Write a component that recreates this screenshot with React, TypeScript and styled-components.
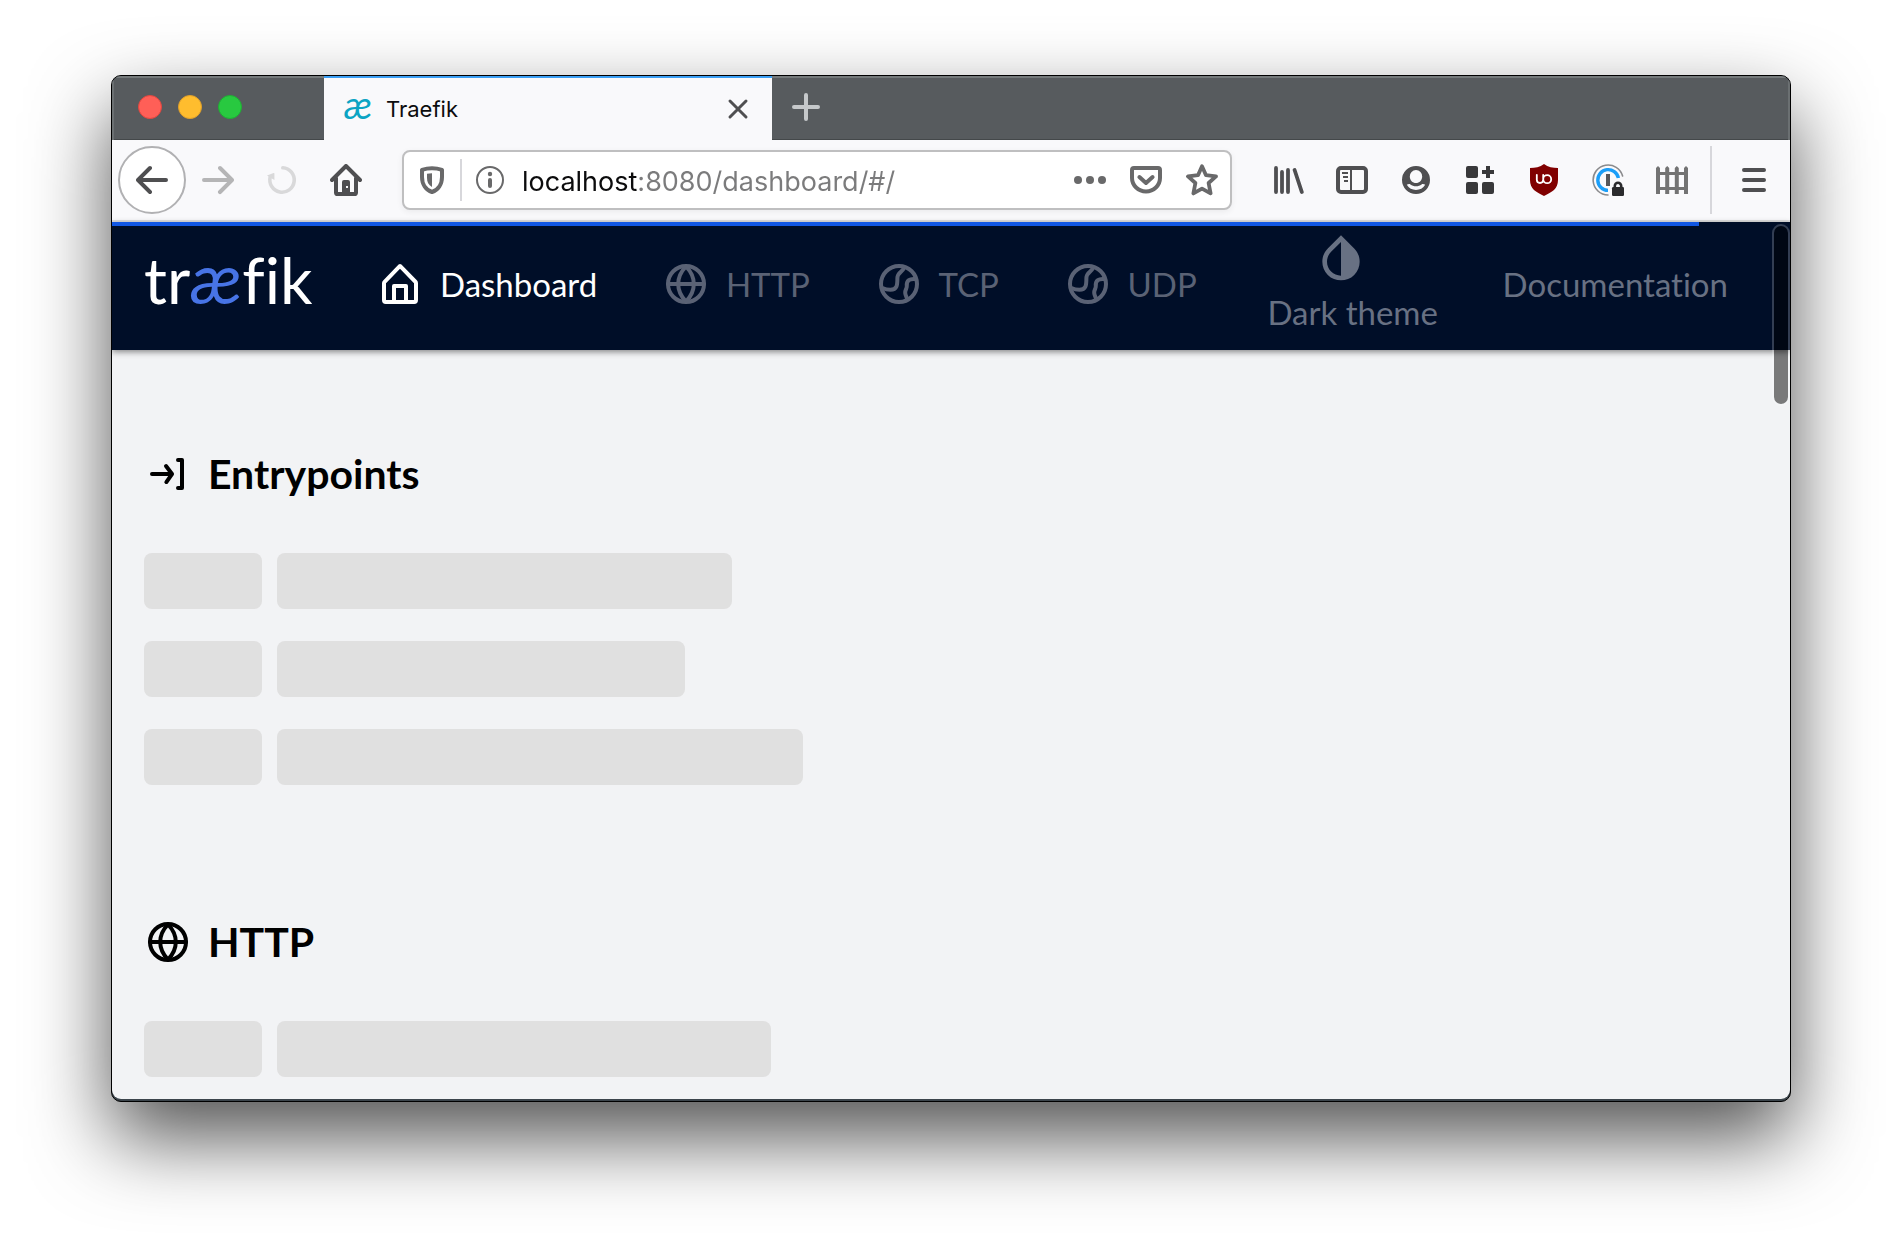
import React from 'react';
import styled, { createGlobalStyle } from 'styled-components';

const UI_FONT = 'Inter, "Liberation Sans", sans-serif';
const APP_FONT = 'Lato, "Open Sans", sans-serif';

const GlobalStyle = createGlobalStyle`
  *, *::before, *::after { box-sizing: border-box; }
  body { margin: 0; background: #fff; font-family: ${APP_FONT}; font-variant-ligatures: none; }
  button { border: 0; padding: 0; margin: 0; background: none; color: inherit; font: inherit; cursor: pointer; }
  svg { display: block; flex: none; }
`;

const Desktop = styled.div`
  min-height: 100vh;
  padding: 75px 111px 147px;
  overflow: hidden;
`;

const BrowserWindow = styled.div`
  border: 1px solid #000;
  border-radius: 10px;
  overflow: hidden;
  background: #3b444b;
  box-shadow: 0 36px 80px rgba(0, 0, 0, 0.68);
`;

const TabStrip = styled.div`
  display: flex;
  height: 64px;
  background: #575b5e;
  box-shadow: inset 0 2px #757a7b, inset 2px 0 #6b7072, inset -2px 0 #6b7072, inset 0 -1px #44484a;
`;

const WindowControls = styled.div`
  display: flex;
  align-items: center;
  gap: 16px;
  width: 212px;
  padding: 0 0 2px 26px;
`;

const Light = styled.button<{ $fill: string; $edge: string }>`
  width: 24px;
  height: 24px;
  border: 1px solid ${(p) => p.$edge};
  border-radius: 50%;
  background: ${(p) => p.$fill};
`;

const Tab = styled.div`
  display: flex;
  align-items: center;
  width: 448px;
  padding: 0 18px 0 20px;
  border-top: 2px solid #3a9ff5;
  background: #f9f9fb;
  color: #0c0c0d;
  font: 22px/28px ${UI_FONT};
`;

const Favicon = styled.span`
  width: 42px;
  color: #0ba4c4;
  font: italic 38px/28px ${APP_FONT};
  padding-bottom: 10px;
`;

const TabTitle = styled.span`
  flex: 1;
`;

const SquareButton = styled.button<{ $w: number; $color?: string }>`
  display: flex;
  align-items: center;
  justify-content: center;
  flex: none;
  width: ${(p) => p.$w}px;
  color: ${(p) => p.$color ?? '#4f4f51'};
`;

const NewTabButton = styled(SquareButton)`
  padding-bottom: 2px;
`;

const Toolbar = styled.div`
  display: flex;
  align-items: center;
  height: 82px;
  padding: 0 4px 0 6px;
  border-bottom: 2px solid #e0e0e1;
  background: #f9f9fb;
`;

const BackButton = styled.button`
  display: flex;
  align-items: center;
  justify-content: center;
  flex: none;
  width: 68px;
  height: 68px;
  border: 2px solid #b1b1b3;
  border-radius: 50%;
  background: #fff;
  color: #4f4f51;
`;

const UrlBar = styled.div`
  display: flex;
  align-items: center;
  flex: 1;
  min-width: 0;
  height: 60px;
  margin: 0 24px;
  border: 2px solid #bfbfc0;
  border-radius: 8px;
  background: #fff;
  box-shadow: 0 2px 6px rgba(0, 0, 0, 0.06);
`;

const Divider = styled.span<{ $h: number }>`
  flex: none;
  width: 2px;
  height: ${(p) => p.$h}px;
  background: #d7d7db;
`;

const UrlInput = styled.input`
  flex: 1;
  min-width: 0;
  height: 42px;
  padding: 2px 4px 0;
  border: 0;
  outline: 0;
  font: 27px/40px ${UI_FONT};
  color: #7b7b7c;
  background: linear-gradient(to right, #0c0c0d 119px, #7b7b7c 119px);
  background-clip: text;
  -webkit-background-clip: text;
  -webkit-text-fill-color: transparent;
`;

const ToolbarDivider = styled(Divider)`
  margin: 0 10px 0 6px;
`;

const Page = styled.div`
  position: relative;
  margin-bottom: 2px;
  background: #f2f3f5;
  border-radius: 0 0 9px 9px;
`;

const Progress = styled.div`
  position: absolute;
  top: 0;
  left: 0;
  height: 4px;
  background: #1157e4;
`;

const ScrollThumb = styled.div`
  position: absolute;
  top: 2px;
  right: 0;
  z-index: 2;
  width: 18px;
  height: 182px;
  border: 2px solid rgba(255, 255, 255, 0.2);
  border-radius: 9px;
  background: rgba(0, 0, 0, 0.5);
  background-clip: padding-box;
`;

const Header = styled.header`
  position: relative;
  display: flex;
  align-items: center;
  height: 128px;
  padding: 0 62px 4px 32px;
  background: #000e28;
  box-shadow: 0 2px 6px rgba(0, 0, 0, 0.45);
`;

const Logo = styled.a`
  flex: none;
  width: 172px;
  color: #fff;
  font: 64px/72px ${APP_FONT};
  font-variant-ligatures: none;
  text-decoration: none;
  white-space: nowrap;
  padding-bottom: 12px;
`;

const LogoMark = styled.span`
  color: #4774e6;
  font-size: 70px;
  font-style: italic;
`;

const Nav = styled.nav`
  display: flex;
  flex: 1;
  align-items: center;
  justify-content: space-between;
  margin-left: 60px;
`;

const NavLink = styled.a<{ $tone: string }>`
  display: flex;
  align-items: center;
  gap: 16px;
  color: ${(p) => p.$tone};
  font-size: 33px;
  line-height: 48px;
  text-decoration: none;
  white-space: nowrap;
`;

const ThemeButton = styled.button`
  display: flex;
  flex-direction: column;
  align-items: center;
  padding-left: 6px;
  color: #687183;
  font: 33px/52px ${APP_FONT};
  white-space: nowrap;

  svg {
    margin-right: 24px;
  }
`;

const Main = styled.main`
  display: flex;
  flex-direction: column;
  gap: 132px;
  padding: 99px 32px 22px;
`;

const SectionTitle = styled.h2`
  display: flex;
  align-items: center;
  gap: 16px;
  margin: 0 0 54px;
  color: #000;
  font: 700 41px/50px ${APP_FONT};
  font-variant-ligatures: none;
`;

const Rows = styled.div`
  display: grid;
  gap: 32px;
`;

const Row = styled.div`
  display: flex;
  gap: 15px;
`;

const Skeleton = styled.div<{ $w: number }>`
  width: ${(p) => p.$w}px;
  height: 56px;
  border-radius: 8px;
  background: #e0e0e0;
`;

const Glyph = ({ size = 32, box = 16, children }: { size?: number; box?: number; children: React.ReactNode }) => (
  <svg width={size} height={size} viewBox={`0 0 ${box} ${box}`} fill="currentColor" aria-hidden="true">
    {children}
  </svg>
);

const line = { fill: 'none', stroke: 'currentColor', strokeLinecap: 'round', strokeLinejoin: 'round' } as const;

const ArrowLeft = () => (
  <Glyph>
    <path d="M15 7H3.414l4.293-4.293a1 1 0 0 0-1.414-1.414l-6 6a1 1 0 0 0 0 1.414l6 6a1 1 0 0 0 1.414-1.414L3.414 9H15a1 1 0 0 0 0-2z" />
  </Glyph>
);

const ArrowRight = () => (
  <Glyph>
    <path d="M15.707 7.293l-6-6a1 1 0 0 0-1.414 1.414L12.586 7H1a1 1 0 0 0 0 2h11.586l-4.293 4.293a1 1 0 1 0 1.414 1.414l6-6a1 1 0 0 0 0-1.414z" />
  </Glyph>
);

const Reload = () => (
  <Glyph>
    <path {...line} strokeWidth="1.8" d="M8.4 1.900a6.100 6.100 0 1 1-6.300 4.600" />
    <path d="M.5 5.800 3.800 4.500a.3.3 0 0 1 .4.3v3.200z" />
  </Glyph>
);

const HomeSolid = () => (
  <Glyph>
    <path {...line} strokeWidth="2" d="M1 8 8 1l7 7M3 7v7.2a.8.8 0 0 0 .8.8h8.4a.8.8 0 0 0 .8-.8V7" />
    <path d="M6 15V9a1 1 0 0 1 1-1h2a1 1 0 0 1 1 1v6zm2-4v1h1v-1z" fillRule="evenodd" />
  </Glyph>
);

const Shield = () => (
  <Glyph>
    <path {...line} strokeWidth="2" d="M8 2.1c1.8 0 3.5.3 5 .8v3.600C13 10.200 11 13 8 14 5 13 3 10.200 3 6.500V2.900c1.500-.5 3.200-.8 5-.8z" />
    <path d="M8 4.600v6.900C6.200 10.500 5.500 9 5.500 7V4.900C6.300 4.700 7.100 4.600 8 4.600z" />
  </Glyph>
);

const Info = () => (
  <Glyph>
    <circle {...line} strokeWidth="1" cx="8" cy="8" r="6.500" />
    <circle cx="8" cy="5" r="1.100" />
    <rect x="7" y="7" width="2" height="5" rx="1" />
  </Glyph>
);

const Dots = () => (
  <Glyph>
    <circle cx="2" cy="8" r="2" />
    <circle cx="8" cy="8" r="2" />
    <circle cx="14" cy="8" r="2" />
  </Glyph>
);

const Pocket = () => (
  <Glyph>
    <path {...line} strokeWidth="2" d="M2 2h12a1 1 0 0 1 1 1v4A7 6.700 0 0 1 1 7V3a1 1 0 0 1 1-1z" />
    <path {...line} strokeWidth="2" d="M4.700 6.500 8 9.500l3.300-3" />
  </Glyph>
);

const Star = () => (
  <Glyph>
    <path {...line} strokeWidth="1.900" d="M8 1.100 10 5.600l5 .6-3.700 3.300 1 5.200L8 12.300l-4.300 2.400 1-5.200L1 6.200l5-.6z" />
  </Glyph>
);

const Library = () => (
  <Glyph>
    <path {...line} strokeWidth="1.900" d="M2 2v12M5 4v10M8 3v11M11.300 3l3.600 11" />
  </Glyph>
);

const Sidebar = () => (
  <Glyph>
    <rect {...line} strokeWidth="2" x="1" y="2" width="14" height="12" rx="1.500" />
    <path {...line} strokeWidth="1" strokeLinecap="butt" d="M7.500 2v12M3 4.500h3M3.500 6.500H6M4 8.500h2" />
  </Glyph>
);

const Account = () => (
  <Glyph>
    <path
      fillRule="evenodd"
      d="M8 1a7 7 0 1 1 0 14A7 7 0 0 1 8 1zm0 2a3.100 3.100 0 0 0-3.100 3.200C4.900 8 6.300 9.500 8 9.500s3.100-1.500 3.100-3.300A3.100 3.100 0 0 0 8 3zm-4.600 7.400c1 1.700 2.700 2.600 4.600 2.600s3.600-.9 4.600-2.600c-.5-.4-1.300-.6-1.800-.2-.8.600-1.700.9-2.800.9s-2-.3-2.800-.9c-.5-.4-1.300-.2-1.800.2z"
    />
  </Glyph>
);

const Extensions = () => (
  <Glyph>
    <rect x="1" y="1" width="6" height="6" rx="1" />
    <rect x="1" y="9" width="6" height="6" rx="1" />
    <rect x="9" y="9" width="6" height="6" rx="1" />
    <path d="M11 1h2v2h2v2h-2v2h-2V5H9V3h2z" />
  </Glyph>
);

const BlockerShield = () => (
  <Glyph>
    <path fill="#800000" d="M8 0c2 1.500 4.500 2 7 2v6c0 4.500-3 6-7 8-4-2-7-3.500-7-8V2c2.500 0 5-.5 7-2z" />
    <path {...line} stroke="#fff" strokeWidth=".9" d="M4.400 5.400v2.500a1.600 1.600 0 0 0 3.200 0V5.400M11.600 7.600a2 2 0 1 1-4 0 2 2 0 0 1 4 0z" />
  </Glyph>
);

const PasswordLock = () => (
  <Glyph>
    <path {...line} stroke="#8a8a8c" strokeWidth=".8" d="M15.300 6A7.500 7.500 0 1 0 8 15.500" />
    <path {...line} stroke="#1b9ef8" strokeWidth="1.700" strokeLinecap="butt" d="M13.200 7A5.200 5.200 0 1 0 8 13.200" />
    <rect x="7" y="5" width="2" height="6" fill="#55565a" />
    <rect x="10" y="11.500" width="6" height="4.500" rx=".6" fill="#2b2b2d" />
    <path {...line} stroke="#2b2b2d" strokeWidth="1.300" d="M11.400 12v-1a1.600 1.600 0 0 1 3.200 0v1" />
  </Glyph>
);

const Fence = () => (
  <Glyph>
    <path d="M0 15V2l1-1 1 1v13zM4.600 15V2l1-1 1 1v13zM9.400 15V2l1-1 1 1v13zM14 15V2l1-1 1 1v13z" />
    <path d="M0 4h16v1.500H0zM0 11.500h16V13H0z" />
  </Glyph>
);

const Menu = () => (
  <Glyph>
    <path {...line} strokeWidth="2" d="M3 3h10M3 8h10M3 13h10" />
  </Glyph>
);

const HomeOutline = () => (
  <Glyph size={48} box={24}>
    <path d="M20.420 10.180L12.710 2.300a1 1 0 0 0-1.420 0l-7.710 7.890A2 2 0 0 0 3 11.620V20a2 2 0 0 0 1.890 2h14.220A2 2 0 0 0 21 20v-8.380a2.070 2.070 0 0 0-.58-1.440zM10 20v-6h4v6zm9 0h-3v-7a1 1 0 0 0-1-1H9a1 1 0 0 0-1 1v7H5v-8.420l7-7.150 7 7.190z" />
  </Glyph>
);

const Globe = () => (
  <Glyph size={48} box={24}>
    <g {...line} strokeWidth="2">
      <circle cx="12" cy="12" r="9" />
      <path d="M3 12h18M12 3.200c-5.200 5.400-5.200 12.200 0 17.600M12 3.200c5.200 5.400 5.200 12.200 0 17.600" />
    </g>
  </Glyph>
);

const GlobeLand = () => (
  <Glyph size={48} box={24}>
    <g {...line} strokeWidth="2">
      <circle cx="12" cy="12" r="9" />
      <path d="M14.500 4c-.8 1.900-3.300 2.400-3.300 4.900 0 3.600-.1 6-3.500 6-1.600 0-2.700-.3-4-.9M20.500 9.600c-3.200-.4-4.800.6-4.600 3.400.1 1.200-.9 2-.8 3.400.1 1.300.7 2 1 3.300" />
    </g>
  </Glyph>
);

const Login = () => (
  <Glyph size={48} box={24}>
    <path d="M19 4h-2a1 1 0 0 0 0 2h1v12h-1a1 1 0 0 0 0 2h2a1 1 0 0 0 1-1V5a1 1 0 0 0-1-1z" />
    <path d="M11.800 7.400a1 1 0 0 0-1.600 1.200L12 11H4a1 1 0 0 0 0 2h8.090l-1.720 2.440a1 1 0 0 0 .24 1.400 1 1 0 0 0 .58.180 1 1 0 0 0 .81-.42l2.820-4a1 1 0 0 0 0-1.180z" />
  </Glyph>
);

const Drop = () => (
  <Glyph size={56} box={24}>
    <path d="M17.660 7.930L12 2.270 6.340 7.930c-3.120 3.120-3.120 8.190 0 11.310C7.900 20.800 9.950 21.580 12 21.580s4.100-.78 5.660-2.340c3.120-3.120 3.120-8.190 0-11.310zM12 19.590c-1.600 0-3.110-.62-4.240-1.760C6.620 16.690 6 15.190 6 13.590s.62-3.110 1.760-4.240L12 5.100v14.490z" />
  </Glyph>
);

const lights = [
  { label: 'Close window', fill: '#ff5f57', edge: '#e2463f' },
  { label: 'Minimize window', fill: '#ffbd2e', edge: '#e0a02a' },
  { label: 'Zoom window', fill: '#28c940', edge: '#1fae34' },
];

const tools = [
  { label: 'Library', icon: <Library /> },
  { label: 'Sidebars', icon: <Sidebar /> },
  { label: 'Account', icon: <Account /> },
  { label: 'Extensions', icon: <Extensions />, color: '#38383a' },
  { label: 'Content blocker', icon: <BlockerShield /> },
  { label: 'Password manager', icon: <PasswordLock /> },
  { label: 'Containers', icon: <Fence />, color: '#737373' },
];

const links = [
  { label: 'Dashboard', icon: <HomeOutline />, tone: '#ffffff' },
  { label: 'HTTP', icon: <Globe />, tone: '#5a6275' },
  { label: 'TCP', icon: <GlobeLand />, tone: '#5a6275' },
  { label: 'UDP', icon: <GlobeLand />, tone: '#5a6275' },
];

const sections = [
  { title: 'Entrypoints', icon: <Login />, widths: [455, 408, 526] },
  { title: 'HTTP', icon: <Globe />, widths: [494] },
];

const loaded = 94.6;

export default function App() {
  return (
    <Desktop>
      <GlobalStyle />
      <BrowserWindow>
        <TabStrip>
          <WindowControls>
            {lights.map((l) => (
              <Light key={l.label} aria-label={l.label} $fill={l.fill} $edge={l.edge} />
            ))}
          </WindowControls>
          <Tab>
            <Favicon aria-hidden="true">æ</Favicon>
            <TabTitle>Traefik</TabTitle>
            <SquareButton $w={32} aria-label="Close tab">
              <Glyph>
                <path {...line} strokeWidth="1.500" d="M4 4l8 8M12 4l-8 8" />
              </Glyph>
            </SquareButton>
          </Tab>
          <NewTabButton $w={68} $color="#c5c8ca" aria-label="New tab">
            <Glyph>
              <path {...line} strokeWidth="2" d="M8 2v12M2 8h12" />
            </Glyph>
          </NewTabButton>
        </TabStrip>

        <Toolbar>
          <BackButton aria-label="Back">
            <ArrowLeft />
          </BackButton>
          <SquareButton $w={64} $color="#b5b5b6" aria-label="Forward">
            <ArrowRight />
          </SquareButton>
          <SquareButton $w={64} $color="#d9d9da" aria-label="Reload">
            <Reload />
          </SquareButton>
          <SquareButton $w={64} aria-label="Home">
            <HomeSolid />
          </SquareButton>
          <UrlBar>
            <SquareButton $w={56} $color="#69696a" aria-label="Tracking protection">
              <Shield />
            </SquareButton>
            <Divider $h={42} />
            <SquareButton $w={56} $color="#69696a" aria-label="Site information">
              <Info />
            </SquareButton>
            <UrlInput aria-label="Address" type="text" defaultValue="localhost:8080/dashboard/#/" spellCheck={false} />
            <SquareButton $w={56} $color="#69696a" aria-label="Page actions">
              <Dots />
            </SquareButton>
            <SquareButton $w={56} $color="#69696a" aria-label="Save to Pocket">
              <Pocket />
            </SquareButton>
            <SquareButton $w={56} $color="#69696a" aria-label="Bookmark">
              <Star />
            </SquareButton>
          </UrlBar>
          {tools.map((t) => (
            <SquareButton key={t.label} $w={64} $color={t.color} aria-label={t.label}>
              {t.icon}
            </SquareButton>
          ))}
          <ToolbarDivider $h={68} />
          <SquareButton $w={64} aria-label="Menu">
            <Menu />
          </SquareButton>
        </Toolbar>

        <Page>
          <Header>
            <Progress role="progressbar" aria-label="Loading" aria-valuenow={loaded} style={{ width: `${loaded}%` }} />
            <Logo href="#/" aria-label="træfik">
              tr<LogoMark>æ</LogoMark>fik
            </Logo>
            <Nav>
              {links.map((l) => (
                <NavLink key={l.label} href="#/" $tone={l.tone}>
                  {l.icon}
                  {l.label}
                </NavLink>
              ))}
              <ThemeButton>
                <Drop />
                Dark theme
              </ThemeButton>
              <NavLink href="#/" $tone="#687183">
                Documentation
              </NavLink>
            </Nav>
          </Header>
          <Main>
            {sections.map((s) => (
              <section key={s.title}>
                <SectionTitle>
                  {s.icon}
                  {s.title}
                </SectionTitle>
                <Rows>
                  {s.widths.map((w) => (
                    <Row key={w}>
                      <Skeleton $w={118} />
                      <Skeleton $w={w} />
                    </Row>
                  ))}
                </Rows>
              </section>
            ))}
          </Main>
          <ScrollThumb />
        </Page>
      </BrowserWindow>
    </Desktop>
  );
}
